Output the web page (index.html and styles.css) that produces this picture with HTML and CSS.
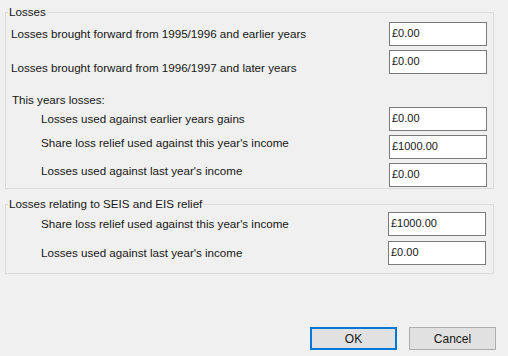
FILE: index.html
```html
<!DOCTYPE html>
<html lang="en">
<head>
    <meta charset="UTF-8">
    <title>Losses</title>
    <link rel="stylesheet" href="styles.css">
</head>
<body>
    <div class="dialog">
        <fieldset class="group group-main">
            <legend>Losses</legend>
            <div class="row">
                <span class="label">Losses brought forward from 1995/1996 and earlier years</span>
                <input class="money" type="text" value="£0.00" readonly>
            </div>
            <div class="row">
                <span class="label low">Losses brought forward from 1996/1997 and later years</span>
                <input class="money" type="text" value="£0.00" readonly>
            </div>
            <div class="heading">This years losses:</div>
            <div class="row">
                <span class="label indent">Losses used against earlier years gains</span>
                <input class="money" type="text" value="£0.00" readonly>
            </div>
            <div class="row">
                <span class="label indent high">Share loss relief used against this year's income</span>
                <input class="money" type="text" value="£1000.00" readonly>
            </div>
            <div class="row row-last">
                <span class="label indent high">Losses used against last year's income</span>
                <input class="money" type="text" value="£0.00" readonly>
            </div>
        </fieldset>

        <fieldset class="group group-seis">
            <legend>Losses relating to SEIS and EIS relief</legend>
            <div class="row">
                <span class="label indent">Share loss relief used against this year's income</span>
                <input class="money" type="text" value="£1000.00" readonly>
            </div>
            <div class="row row-last">
                <span class="label indent">Losses used against last year's income</span>
                <input class="money" type="text" value="£0.00" readonly>
            </div>
        </fieldset>

        <div class="buttons">
            <button class="btn btn-default">OK</button>
            <button class="btn">Cancel</button>
        </div>
    </div>
</body>
</html>
```

FILE: styles.css
```css
body {
    margin: 0;
    background-color: #f0f0f0;
    font-family: "Liberation Sans", Arial, sans-serif;
    font-size: 11.6px;
    color: #161616;
}
.dialog {
    width: 508px;
    height: 356px;
    padding-top: 5px;
    box-sizing: border-box;
}
.group {
    margin: 0 14px 0 5px;
    padding: 0 0 1px 0;
    border: 1px solid #dcdcdc;
}
.group legend {
    margin-left: 2px;
    padding: 0 1px;
    line-height: 14px;
}
.group-main {
    padding-top: 3px;
}
.group-seis {
    margin-top: 8px;
    padding-top: 1px;
    padding-bottom: 8px;
}
.row {
    display: flex;
    align-items: center;
    justify-content: space-between;
    height: 24px;
    margin-bottom: 4px;
    padding-left: 5px;
    padding-right: 6px;
}
.row-last {
    margin-bottom: 0;
}
.group-seis .row {
    margin-bottom: 5px;
    padding-right: 7px;
}
.group-seis .row-last {
    margin-bottom: 0;
}
.label {
    line-height: 14px;
}
.label.indent {
    padding-left: 30px;
}
.label.low {
    padding-top: 12px;
}
.label.high {
    padding-bottom: 8px;
}
.heading {
    margin: 19px 0 0 6px;
    line-height: 14px;
}
.money {
    width: 98px;
    height: 24px;
    box-sizing: border-box;
    margin: 0;
    padding: 0 2px 3px;
    border: 1px solid #7a7a7a;
    border-radius: 0;
    background: #fff;
    font-family: "Liberation Sans", Arial, sans-serif;
    font-size: 11px;
    color: #161616;
    outline: none;
}
.buttons {
    display: flex;
    justify-content: flex-end;
    gap: 12px;
    margin-top: 53px;
    padding-right: 12px;
}
.btn {
    width: 87px;
    height: 23px;
    margin: 0;
    padding: 0;
    border: 1px solid #adadad;
    border-radius: 0;
    background: #e1e1e1;
    font-family: "Liberation Sans", Arial, sans-serif;
    font-size: 12px;
    color: #161616;
}
.btn-default {
    border: 2px solid #0078d7;
}
```
